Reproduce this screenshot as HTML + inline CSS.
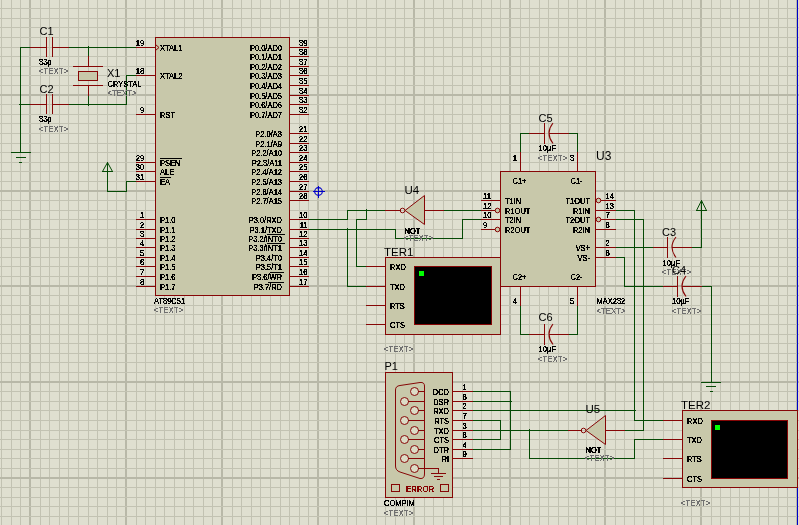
<!DOCTYPE html>
<html><head><meta charset="utf-8"><style>
html,body{margin:0;padding:0;background:#DFDFD0;}
svg{display:block;will-change:transform;}
text{font-family:"Liberation Sans", sans-serif;}
</style></head><body>
<svg width="799" height="525" viewBox="0 0 799 525">
<defs><filter id="crisp" x="-20%" y="-50%" width="140%" height="200%" filterUnits="objectBoundingBox"><feComponentTransfer><feFuncA type="discrete" tableValues="0 0 1 1 1 1"/></feComponentTransfer></filter><filter id="crisp2" x="-20%" y="-50%" width="140%" height="200%" filterUnits="objectBoundingBox"><feComponentTransfer><feFuncA type="discrete" tableValues="0 0 1 1"/></feComponentTransfer></filter></defs>
<rect x="0" y="0" width="799" height="525" fill="#DFDFD0"/><rect x="1" y="0" width="1" height="525" fill="#C2C2B2"/><rect x="11" y="0" width="1" height="525" fill="#C2C2B2"/><rect x="20" y="0" width="1" height="525" fill="#C2C2B2"/><rect x="29" y="0" width="2" height="525" fill="#B8B8A8"/><rect x="40" y="0" width="1" height="525" fill="#C2C2B2"/><rect x="49" y="0" width="1" height="525" fill="#C2C2B2"/><rect x="59" y="0" width="1" height="525" fill="#C2C2B2"/><rect x="68" y="0" width="1" height="525" fill="#C2C2B2"/><rect x="78" y="0" width="1" height="525" fill="#C2C2B2"/><rect x="88" y="0" width="1" height="525" fill="#C2C2B2"/><rect x="97" y="0" width="1" height="525" fill="#C2C2B2"/><rect x="107" y="0" width="1" height="525" fill="#C2C2B2"/><rect x="116" y="0" width="1" height="525" fill="#C2C2B2"/><rect x="125" y="0" width="2" height="525" fill="#B8B8A8"/><rect x="136" y="0" width="1" height="525" fill="#C2C2B2"/><rect x="145" y="0" width="1" height="525" fill="#C2C2B2"/><rect x="155" y="0" width="1" height="525" fill="#C2C2B2"/><rect x="164" y="0" width="1" height="525" fill="#C2C2B2"/><rect x="174" y="0" width="1" height="525" fill="#C2C2B2"/><rect x="184" y="0" width="1" height="525" fill="#C2C2B2"/><rect x="193" y="0" width="1" height="525" fill="#C2C2B2"/><rect x="203" y="0" width="1" height="525" fill="#C2C2B2"/><rect x="212" y="0" width="1" height="525" fill="#C2C2B2"/><rect x="221" y="0" width="2" height="525" fill="#B8B8A8"/><rect x="232" y="0" width="1" height="525" fill="#C2C2B2"/><rect x="241" y="0" width="1" height="525" fill="#C2C2B2"/><rect x="251" y="0" width="1" height="525" fill="#C2C2B2"/><rect x="260" y="0" width="1" height="525" fill="#C2C2B2"/><rect x="270" y="0" width="1" height="525" fill="#C2C2B2"/><rect x="280" y="0" width="1" height="525" fill="#C2C2B2"/><rect x="289" y="0" width="1" height="525" fill="#C2C2B2"/><rect x="299" y="0" width="1" height="525" fill="#C2C2B2"/><rect x="308" y="0" width="1" height="525" fill="#C2C2B2"/><rect x="317" y="0" width="2" height="525" fill="#B8B8A8"/><rect x="328" y="0" width="1" height="525" fill="#C2C2B2"/><rect x="337" y="0" width="1" height="525" fill="#C2C2B2"/><rect x="347" y="0" width="1" height="525" fill="#C2C2B2"/><rect x="356" y="0" width="1" height="525" fill="#C2C2B2"/><rect x="366" y="0" width="1" height="525" fill="#C2C2B2"/><rect x="376" y="0" width="1" height="525" fill="#C2C2B2"/><rect x="385" y="0" width="1" height="525" fill="#C2C2B2"/><rect x="395" y="0" width="1" height="525" fill="#C2C2B2"/><rect x="404" y="0" width="1" height="525" fill="#C2C2B2"/><rect x="413" y="0" width="2" height="525" fill="#B8B8A8"/><rect x="424" y="0" width="1" height="525" fill="#C2C2B2"/><rect x="433" y="0" width="1" height="525" fill="#C2C2B2"/><rect x="443" y="0" width="1" height="525" fill="#C2C2B2"/><rect x="452" y="0" width="1" height="525" fill="#C2C2B2"/><rect x="462" y="0" width="1" height="525" fill="#C2C2B2"/><rect x="472" y="0" width="1" height="525" fill="#C2C2B2"/><rect x="481" y="0" width="1" height="525" fill="#C2C2B2"/><rect x="491" y="0" width="1" height="525" fill="#C2C2B2"/><rect x="500" y="0" width="1" height="525" fill="#C2C2B2"/><rect x="509" y="0" width="2" height="525" fill="#B8B8A8"/><rect x="520" y="0" width="1" height="525" fill="#C2C2B2"/><rect x="529" y="0" width="1" height="525" fill="#C2C2B2"/><rect x="539" y="0" width="1" height="525" fill="#C2C2B2"/><rect x="548" y="0" width="1" height="525" fill="#C2C2B2"/><rect x="558" y="0" width="1" height="525" fill="#C2C2B2"/><rect x="568" y="0" width="1" height="525" fill="#C2C2B2"/><rect x="577" y="0" width="1" height="525" fill="#C2C2B2"/><rect x="586" y="0" width="1" height="525" fill="#C2C2B2"/><rect x="595" y="0" width="1" height="525" fill="#C2C2B2"/><rect x="604" y="0" width="2" height="525" fill="#B8B8A8"/><rect x="615" y="0" width="1" height="525" fill="#C2C2B2"/><rect x="624" y="0" width="1" height="525" fill="#C2C2B2"/><rect x="634" y="0" width="1" height="525" fill="#C2C2B2"/><rect x="643" y="0" width="1" height="525" fill="#C2C2B2"/><rect x="653" y="0" width="1" height="525" fill="#C2C2B2"/><rect x="663" y="0" width="1" height="525" fill="#C2C2B2"/><rect x="672" y="0" width="1" height="525" fill="#C2C2B2"/><rect x="682" y="0" width="1" height="525" fill="#C2C2B2"/><rect x="691" y="0" width="1" height="525" fill="#C2C2B2"/><rect x="700" y="0" width="2" height="525" fill="#B8B8A8"/><rect x="711" y="0" width="1" height="525" fill="#C2C2B2"/><rect x="720" y="0" width="1" height="525" fill="#C2C2B2"/><rect x="730" y="0" width="1" height="525" fill="#C2C2B2"/><rect x="739" y="0" width="1" height="525" fill="#C2C2B2"/><rect x="749" y="0" width="1" height="525" fill="#C2C2B2"/><rect x="759" y="0" width="1" height="525" fill="#C2C2B2"/><rect x="768" y="0" width="1" height="525" fill="#C2C2B2"/><rect x="778" y="0" width="1" height="525" fill="#C2C2B2"/><rect x="787" y="0" width="1" height="525" fill="#C2C2B2"/><rect x="796" y="0" width="2" height="525" fill="#B8B8A8"/><rect x="0" y="-2" width="799" height="2" fill="#B8B8A8"/><rect x="0" y="8" width="799" height="1" fill="#C2C2B2"/><rect x="0" y="18" width="799" height="1" fill="#C2C2B2"/><rect x="0" y="27" width="799" height="1" fill="#C2C2B2"/><rect x="0" y="37" width="799" height="1" fill="#C2C2B2"/><rect x="0" y="47" width="799" height="1" fill="#C2C2B2"/><rect x="0" y="56" width="799" height="1" fill="#C2C2B2"/><rect x="0" y="66" width="799" height="1" fill="#C2C2B2"/><rect x="0" y="75" width="799" height="1" fill="#C2C2B2"/><rect x="0" y="85" width="799" height="1" fill="#C2C2B2"/><rect x="0" y="94" width="799" height="2" fill="#B8B8A8"/><rect x="0" y="104" width="799" height="1" fill="#C2C2B2"/><rect x="0" y="114" width="799" height="1" fill="#C2C2B2"/><rect x="0" y="123" width="799" height="1" fill="#C2C2B2"/><rect x="0" y="133" width="799" height="1" fill="#C2C2B2"/><rect x="0" y="143" width="799" height="1" fill="#C2C2B2"/><rect x="0" y="152" width="799" height="1" fill="#C2C2B2"/><rect x="0" y="162" width="799" height="1" fill="#C2C2B2"/><rect x="0" y="171" width="799" height="1" fill="#C2C2B2"/><rect x="0" y="181" width="799" height="1" fill="#C2C2B2"/><rect x="0" y="190" width="799" height="2" fill="#B8B8A8"/><rect x="0" y="200" width="799" height="1" fill="#C2C2B2"/><rect x="0" y="210" width="799" height="1" fill="#C2C2B2"/><rect x="0" y="219" width="799" height="1" fill="#C2C2B2"/><rect x="0" y="229" width="799" height="1" fill="#C2C2B2"/><rect x="0" y="238" width="799" height="1" fill="#C2C2B2"/><rect x="0" y="247" width="799" height="1" fill="#C2C2B2"/><rect x="0" y="257" width="799" height="1" fill="#C2C2B2"/><rect x="0" y="266" width="799" height="1" fill="#C2C2B2"/><rect x="0" y="276" width="799" height="1" fill="#C2C2B2"/><rect x="0" y="285" width="799" height="2" fill="#B8B8A8"/><rect x="0" y="295" width="799" height="1" fill="#C2C2B2"/><rect x="0" y="305" width="799" height="1" fill="#C2C2B2"/><rect x="0" y="314" width="799" height="1" fill="#C2C2B2"/><rect x="0" y="324" width="799" height="1" fill="#C2C2B2"/><rect x="0" y="334" width="799" height="1" fill="#C2C2B2"/><rect x="0" y="343" width="799" height="1" fill="#C2C2B2"/><rect x="0" y="353" width="799" height="1" fill="#C2C2B2"/><rect x="0" y="362" width="799" height="1" fill="#C2C2B2"/><rect x="0" y="372" width="799" height="1" fill="#C2C2B2"/><rect x="0" y="381" width="799" height="2" fill="#B8B8A8"/><rect x="0" y="391" width="799" height="1" fill="#C2C2B2"/><rect x="0" y="401" width="799" height="1" fill="#C2C2B2"/><rect x="0" y="410" width="799" height="1" fill="#C2C2B2"/><rect x="0" y="420" width="799" height="1" fill="#C2C2B2"/><rect x="0" y="430" width="799" height="1" fill="#C2C2B2"/><rect x="0" y="439" width="799" height="1" fill="#C2C2B2"/><rect x="0" y="449" width="799" height="1" fill="#C2C2B2"/><rect x="0" y="458" width="799" height="1" fill="#C2C2B2"/><rect x="0" y="468" width="799" height="1" fill="#C2C2B2"/><rect x="0" y="477" width="799" height="2" fill="#B8B8A8"/><rect x="0" y="487" width="799" height="1" fill="#C2C2B2"/><rect x="0" y="497" width="799" height="1" fill="#C2C2B2"/><rect x="0" y="506" width="799" height="1" fill="#C2C2B2"/><rect x="0" y="516" width="799" height="1" fill="#C2C2B2"/><rect x="797" y="0" width="1" height="526" fill="#0000C8"/><rect x="20" y="47" width="1" height="106" fill="#064A06"/><rect x="20" y="47" width="11" height="1" fill="#064A06"/><rect x="68" y="47" width="69" height="1" fill="#064A06"/><rect x="20" y="104" width="11" height="1" fill="#064A06"/><rect x="68" y="104" width="59" height="1" fill="#064A06"/><rect x="126" y="75" width="1" height="30" fill="#064A06"/><rect x="126" y="75" width="11" height="1" fill="#064A06"/><rect x="88" y="47" width="1" height="10" fill="#064A06"/><rect x="88" y="95" width="1" height="10" fill="#064A06"/><rect x="126" y="181" width="11" height="1" fill="#064A06"/><rect x="126" y="181" width="1" height="11" fill="#064A06"/><rect x="107" y="191" width="20" height="1" fill="#064A06"/><rect x="308" y="219" width="40" height="1" fill="#064A06"/><rect x="347" y="210" width="1" height="10" fill="#064A06"/><rect x="347" y="210" width="39" height="1" fill="#064A06"/><rect x="366" y="210" width="1" height="10" fill="#064A06"/><rect x="356" y="219" width="11" height="1" fill="#064A06"/><rect x="356" y="219" width="1" height="48" fill="#064A06"/><rect x="356" y="266" width="11" height="1" fill="#064A06"/><rect x="308" y="229" width="88" height="1" fill="#064A06"/><rect x="395" y="229" width="1" height="10" fill="#064A06"/><rect x="395" y="238" width="68" height="1" fill="#064A06"/><rect x="462" y="219" width="1" height="20" fill="#064A06"/><rect x="462" y="219" width="20" height="1" fill="#064A06"/><rect x="347" y="229" width="1" height="58" fill="#064A06"/><rect x="347" y="286" width="20" height="1" fill="#064A06"/><rect x="443" y="210" width="39" height="1" fill="#064A06"/><rect x="520" y="133" width="10" height="1" fill="#064A06"/><rect x="520" y="133" width="1" height="20" fill="#064A06"/><rect x="568" y="133" width="10" height="1" fill="#064A06"/><rect x="577" y="133" width="1" height="20" fill="#064A06"/><rect x="520" y="334" width="10" height="1" fill="#064A06"/><rect x="520" y="305" width="1" height="30" fill="#064A06"/><rect x="568" y="334" width="10" height="1" fill="#064A06"/><rect x="577" y="305" width="1" height="30" fill="#064A06"/><rect x="615" y="210" width="20" height="1" fill="#064A06"/><rect x="634" y="210" width="1" height="211" fill="#064A06"/><rect x="634" y="420" width="30" height="1" fill="#064A06"/><rect x="615" y="219" width="29" height="1" fill="#064A06"/><rect x="643" y="219" width="1" height="212" fill="#064A06"/><rect x="624" y="430" width="20" height="1" fill="#064A06"/><rect x="615" y="247" width="39" height="1" fill="#064A06"/><rect x="691" y="247" width="11" height="1" fill="#064A06"/><rect x="615" y="257" width="10" height="1" fill="#064A06"/><rect x="624" y="257" width="1" height="30" fill="#064A06"/><rect x="624" y="286" width="40" height="1" fill="#064A06"/><rect x="701" y="286" width="11" height="1" fill="#064A06"/><rect x="711" y="286" width="1" height="97" fill="#064A06"/><rect x="472" y="391" width="39" height="1" fill="#064A06"/><rect x="510" y="391" width="1" height="59" fill="#064A06"/><rect x="472" y="449" width="39" height="1" fill="#064A06"/><rect x="472" y="401" width="39" height="1" fill="#064A06"/><rect x="472" y="410" width="163" height="1" fill="#064A06"/><rect x="472" y="420" width="29" height="1" fill="#064A06"/><rect x="500" y="420" width="1" height="20" fill="#064A06"/><rect x="472" y="439" width="29" height="1" fill="#064A06"/><rect x="472" y="430" width="97" height="1" fill="#064A06"/><rect x="529" y="430" width="1" height="29" fill="#064A06"/><rect x="529" y="458" width="106" height="1" fill="#064A06"/><rect x="634" y="439" width="1" height="20" fill="#064A06"/><rect x="634" y="439" width="30" height="1" fill="#064A06"/><rect x="19" y="104" width="3" height="1" fill="#064A06"/><rect x="20" y="103" width="1" height="3" fill="#064A06"/><rect x="87" y="47" width="3" height="1" fill="#064A06"/><rect x="88" y="46" width="1" height="3" fill="#064A06"/><rect x="87" y="104" width="3" height="1" fill="#064A06"/><rect x="88" y="103" width="1" height="3" fill="#064A06"/><rect x="365" y="210" width="3" height="1" fill="#064A06"/><rect x="366" y="209" width="1" height="3" fill="#064A06"/><rect x="346" y="229" width="3" height="1" fill="#064A06"/><rect x="347" y="228" width="1" height="3" fill="#064A06"/><rect x="509" y="401" width="3" height="1" fill="#064A06"/><rect x="510" y="400" width="1" height="3" fill="#064A06"/><rect x="528" y="430" width="3" height="1" fill="#064A06"/><rect x="529" y="429" width="1" height="3" fill="#064A06"/><rect x="633" y="410" width="3" height="1" fill="#064A06"/><rect x="634" y="409" width="1" height="3" fill="#064A06"/><rect x="155" y="37" width="135" height="259" fill="#C8C8AA"/><rect x="155" y="37" width="135" height="1" fill="#860606"/><rect x="155" y="295" width="135" height="1" fill="#860606"/><rect x="155" y="37" width="1" height="259" fill="#860606"/><rect x="289" y="37" width="1" height="259" fill="#860606"/><rect x="136" y="47" width="20" height="1" fill="#860606"/><text filter="url(#crisp)" transform="translate(144.3,46) scale(1,1.15)" font-size="7.6" font-weight="normal" fill="#000" text-anchor="end" stroke="#000" stroke-width="0.1">19</text><text filter="url(#crisp)" transform="translate(160,51) scale(1,1.1)" font-size="7.5" font-weight="normal" fill="#000" text-anchor="start" stroke="#000" stroke-width="0.1">XTAL1</text><rect x="136" y="75" width="20" height="1" fill="#860606"/><text filter="url(#crisp)" transform="translate(144.3,74) scale(1,1.15)" font-size="7.6" font-weight="normal" fill="#000" text-anchor="end" stroke="#000" stroke-width="0.1">18</text><text filter="url(#crisp)" transform="translate(160,79) scale(1,1.1)" font-size="7.5" font-weight="normal" fill="#000" text-anchor="start" stroke="#000" stroke-width="0.1">XTAL2</text><rect x="136" y="114" width="20" height="1" fill="#860606"/><text filter="url(#crisp)" transform="translate(144.3,113) scale(1,1.15)" font-size="7.6" font-weight="normal" fill="#000" text-anchor="end" stroke="#000" stroke-width="0.1">9</text><text filter="url(#crisp)" transform="translate(160,118) scale(1,1.1)" font-size="7.5" font-weight="normal" fill="#000" text-anchor="start" stroke="#000" stroke-width="0.1">RST</text><rect x="136" y="162" width="20" height="1" fill="#860606"/><text filter="url(#crisp)" transform="translate(144.3,161) scale(1,1.15)" font-size="7.6" font-weight="normal" fill="#000" text-anchor="end" stroke="#000" stroke-width="0.1">29</text><text filter="url(#crisp)" transform="translate(160,166) scale(1,1.1)" font-size="7.5" font-weight="normal" fill="#000" text-anchor="start" stroke="#000" stroke-width="0.1">PSEN</text><rect x="136" y="171" width="20" height="1" fill="#860606"/><text filter="url(#crisp)" transform="translate(144.3,170) scale(1,1.15)" font-size="7.6" font-weight="normal" fill="#000" text-anchor="end" stroke="#000" stroke-width="0.1">30</text><text filter="url(#crisp)" transform="translate(160,175) scale(1,1.1)" font-size="7.5" font-weight="normal" fill="#000" text-anchor="start" stroke="#000" stroke-width="0.1">ALE</text><rect x="136" y="181" width="20" height="1" fill="#860606"/><text filter="url(#crisp)" transform="translate(144.3,180) scale(1,1.15)" font-size="7.6" font-weight="normal" fill="#000" text-anchor="end" stroke="#000" stroke-width="0.1">31</text><text filter="url(#crisp)" transform="translate(160,185) scale(1,1.1)" font-size="7.5" font-weight="normal" fill="#000" text-anchor="start" stroke="#000" stroke-width="0.1">EA</text><rect x="136" y="219" width="20" height="1" fill="#860606"/><text filter="url(#crisp)" transform="translate(144.3,218) scale(1,1.15)" font-size="7.6" font-weight="normal" fill="#000" text-anchor="end" stroke="#000" stroke-width="0.1">1</text><text filter="url(#crisp)" transform="translate(160,223) scale(1,1.1)" font-size="7.5" font-weight="normal" fill="#000" text-anchor="start" stroke="#000" stroke-width="0.1">P1.0</text><rect x="136" y="229" width="20" height="1" fill="#860606"/><text filter="url(#crisp)" transform="translate(144.3,228) scale(1,1.15)" font-size="7.6" font-weight="normal" fill="#000" text-anchor="end" stroke="#000" stroke-width="0.1">2</text><text filter="url(#crisp)" transform="translate(160,233) scale(1,1.1)" font-size="7.5" font-weight="normal" fill="#000" text-anchor="start" stroke="#000" stroke-width="0.1">P1.1</text><rect x="136" y="238" width="20" height="1" fill="#860606"/><text filter="url(#crisp)" transform="translate(144.3,237) scale(1,1.15)" font-size="7.6" font-weight="normal" fill="#000" text-anchor="end" stroke="#000" stroke-width="0.1">3</text><text filter="url(#crisp)" transform="translate(160,242) scale(1,1.1)" font-size="7.5" font-weight="normal" fill="#000" text-anchor="start" stroke="#000" stroke-width="0.1">P1.2</text><rect x="136" y="247" width="20" height="1" fill="#860606"/><text filter="url(#crisp)" transform="translate(144.3,246) scale(1,1.15)" font-size="7.6" font-weight="normal" fill="#000" text-anchor="end" stroke="#000" stroke-width="0.1">4</text><text filter="url(#crisp)" transform="translate(160,251) scale(1,1.1)" font-size="7.5" font-weight="normal" fill="#000" text-anchor="start" stroke="#000" stroke-width="0.1">P1.3</text><rect x="136" y="257" width="20" height="1" fill="#860606"/><text filter="url(#crisp)" transform="translate(144.3,256) scale(1,1.15)" font-size="7.6" font-weight="normal" fill="#000" text-anchor="end" stroke="#000" stroke-width="0.1">5</text><text filter="url(#crisp)" transform="translate(160,261) scale(1,1.1)" font-size="7.5" font-weight="normal" fill="#000" text-anchor="start" stroke="#000" stroke-width="0.1">P1.4</text><rect x="136" y="266" width="20" height="1" fill="#860606"/><text filter="url(#crisp)" transform="translate(144.3,265) scale(1,1.15)" font-size="7.6" font-weight="normal" fill="#000" text-anchor="end" stroke="#000" stroke-width="0.1">6</text><text filter="url(#crisp)" transform="translate(160,270) scale(1,1.1)" font-size="7.5" font-weight="normal" fill="#000" text-anchor="start" stroke="#000" stroke-width="0.1">P1.5</text><rect x="136" y="276" width="20" height="1" fill="#860606"/><text filter="url(#crisp)" transform="translate(144.3,275) scale(1,1.15)" font-size="7.6" font-weight="normal" fill="#000" text-anchor="end" stroke="#000" stroke-width="0.1">7</text><text filter="url(#crisp)" transform="translate(160,280) scale(1,1.1)" font-size="7.5" font-weight="normal" fill="#000" text-anchor="start" stroke="#000" stroke-width="0.1">P1.6</text><rect x="136" y="286" width="20" height="1" fill="#860606"/><text filter="url(#crisp)" transform="translate(144.3,285) scale(1,1.15)" font-size="7.6" font-weight="normal" fill="#000" text-anchor="end" stroke="#000" stroke-width="0.1">8</text><text filter="url(#crisp)" transform="translate(160,290) scale(1,1.1)" font-size="7.5" font-weight="normal" fill="#000" text-anchor="start" stroke="#000" stroke-width="0.1">P1.7</text><path d="M155.5,44.5 L159,47.5 L155.5,50.5" fill="none" stroke="#860606" stroke-width="1"/><rect x="160" y="158" width="22" height="1" fill="#000"/><rect x="160" y="177" width="11" height="1" fill="#000"/><rect x="289" y="47" width="20" height="1" fill="#860606"/><text filter="url(#crisp)" transform="translate(307.5,46) scale(1,1.15)" font-size="7.6" font-weight="normal" fill="#000" text-anchor="end" stroke="#000" stroke-width="0.1">39</text><text filter="url(#crisp)" transform="translate(282,51) scale(1,1.1)" font-size="7.5" font-weight="normal" fill="#000" text-anchor="end" stroke="#000" stroke-width="0.1">P0.0/AD0</text><rect x="289" y="56" width="20" height="1" fill="#860606"/><text filter="url(#crisp)" transform="translate(307.5,55) scale(1,1.15)" font-size="7.6" font-weight="normal" fill="#000" text-anchor="end" stroke="#000" stroke-width="0.1">38</text><text filter="url(#crisp)" transform="translate(282,60) scale(1,1.1)" font-size="7.5" font-weight="normal" fill="#000" text-anchor="end" stroke="#000" stroke-width="0.1">P0.1/AD1</text><rect x="289" y="66" width="20" height="1" fill="#860606"/><text filter="url(#crisp)" transform="translate(307.5,65) scale(1,1.15)" font-size="7.6" font-weight="normal" fill="#000" text-anchor="end" stroke="#000" stroke-width="0.1">37</text><text filter="url(#crisp)" transform="translate(282,70) scale(1,1.1)" font-size="7.5" font-weight="normal" fill="#000" text-anchor="end" stroke="#000" stroke-width="0.1">P0.2/AD2</text><rect x="289" y="75" width="20" height="1" fill="#860606"/><text filter="url(#crisp)" transform="translate(307.5,74) scale(1,1.15)" font-size="7.6" font-weight="normal" fill="#000" text-anchor="end" stroke="#000" stroke-width="0.1">36</text><text filter="url(#crisp)" transform="translate(282,79) scale(1,1.1)" font-size="7.5" font-weight="normal" fill="#000" text-anchor="end" stroke="#000" stroke-width="0.1">P0.3/AD3</text><rect x="289" y="85" width="20" height="1" fill="#860606"/><text filter="url(#crisp)" transform="translate(307.5,84) scale(1,1.15)" font-size="7.6" font-weight="normal" fill="#000" text-anchor="end" stroke="#000" stroke-width="0.1">35</text><text filter="url(#crisp)" transform="translate(282,89) scale(1,1.1)" font-size="7.5" font-weight="normal" fill="#000" text-anchor="end" stroke="#000" stroke-width="0.1">P0.4/AD4</text><rect x="289" y="95" width="20" height="1" fill="#860606"/><text filter="url(#crisp)" transform="translate(307.5,94) scale(1,1.15)" font-size="7.6" font-weight="normal" fill="#000" text-anchor="end" stroke="#000" stroke-width="0.1">34</text><text filter="url(#crisp)" transform="translate(282,99) scale(1,1.1)" font-size="7.5" font-weight="normal" fill="#000" text-anchor="end" stroke="#000" stroke-width="0.1">P0.5/AD5</text><rect x="289" y="104" width="20" height="1" fill="#860606"/><text filter="url(#crisp)" transform="translate(307.5,103) scale(1,1.15)" font-size="7.6" font-weight="normal" fill="#000" text-anchor="end" stroke="#000" stroke-width="0.1">33</text><text filter="url(#crisp)" transform="translate(282,108) scale(1,1.1)" font-size="7.5" font-weight="normal" fill="#000" text-anchor="end" stroke="#000" stroke-width="0.1">P0.6/AD6</text><rect x="289" y="114" width="20" height="1" fill="#860606"/><text filter="url(#crisp)" transform="translate(307.5,113) scale(1,1.15)" font-size="7.6" font-weight="normal" fill="#000" text-anchor="end" stroke="#000" stroke-width="0.1">32</text><text filter="url(#crisp)" transform="translate(282,118) scale(1,1.1)" font-size="7.5" font-weight="normal" fill="#000" text-anchor="end" stroke="#000" stroke-width="0.1">P0.7/AD7</text><rect x="289" y="133" width="20" height="1" fill="#860606"/><text filter="url(#crisp)" transform="translate(307.5,132) scale(1,1.15)" font-size="7.6" font-weight="normal" fill="#000" text-anchor="end" stroke="#000" stroke-width="0.1">21</text><text filter="url(#crisp)" transform="translate(282,137) scale(1,1.1)" font-size="7.5" font-weight="normal" fill="#000" text-anchor="end" stroke="#000" stroke-width="0.1">P2.0/A8</text><rect x="289" y="143" width="20" height="1" fill="#860606"/><text filter="url(#crisp)" transform="translate(307.5,142) scale(1,1.15)" font-size="7.6" font-weight="normal" fill="#000" text-anchor="end" stroke="#000" stroke-width="0.1">22</text><text filter="url(#crisp)" transform="translate(282,147) scale(1,1.1)" font-size="7.5" font-weight="normal" fill="#000" text-anchor="end" stroke="#000" stroke-width="0.1">P2.1/A9</text><rect x="289" y="152" width="20" height="1" fill="#860606"/><text filter="url(#crisp)" transform="translate(307.5,151) scale(1,1.15)" font-size="7.6" font-weight="normal" fill="#000" text-anchor="end" stroke="#000" stroke-width="0.1">23</text><text filter="url(#crisp)" transform="translate(282,156) scale(1,1.1)" font-size="7.5" font-weight="normal" fill="#000" text-anchor="end" stroke="#000" stroke-width="0.1">P2.2/A10</text><rect x="289" y="162" width="20" height="1" fill="#860606"/><text filter="url(#crisp)" transform="translate(307.5,161) scale(1,1.15)" font-size="7.6" font-weight="normal" fill="#000" text-anchor="end" stroke="#000" stroke-width="0.1">24</text><text filter="url(#crisp)" transform="translate(282,166) scale(1,1.1)" font-size="7.5" font-weight="normal" fill="#000" text-anchor="end" stroke="#000" stroke-width="0.1">P2.3/A11</text><rect x="289" y="171" width="20" height="1" fill="#860606"/><text filter="url(#crisp)" transform="translate(307.5,170) scale(1,1.15)" font-size="7.6" font-weight="normal" fill="#000" text-anchor="end" stroke="#000" stroke-width="0.1">25</text><text filter="url(#crisp)" transform="translate(282,175) scale(1,1.1)" font-size="7.5" font-weight="normal" fill="#000" text-anchor="end" stroke="#000" stroke-width="0.1">P2.4/A12</text><rect x="289" y="181" width="20" height="1" fill="#860606"/><text filter="url(#crisp)" transform="translate(307.5,180) scale(1,1.15)" font-size="7.6" font-weight="normal" fill="#000" text-anchor="end" stroke="#000" stroke-width="0.1">26</text><text filter="url(#crisp)" transform="translate(282,185) scale(1,1.1)" font-size="7.5" font-weight="normal" fill="#000" text-anchor="end" stroke="#000" stroke-width="0.1">P2.5/A13</text><rect x="289" y="191" width="20" height="1" fill="#860606"/><text filter="url(#crisp)" transform="translate(307.5,190) scale(1,1.15)" font-size="7.6" font-weight="normal" fill="#000" text-anchor="end" stroke="#000" stroke-width="0.1">27</text><text filter="url(#crisp)" transform="translate(282,195) scale(1,1.1)" font-size="7.5" font-weight="normal" fill="#000" text-anchor="end" stroke="#000" stroke-width="0.1">P2.6/A14</text><rect x="289" y="200" width="20" height="1" fill="#860606"/><text filter="url(#crisp)" transform="translate(307.5,199) scale(1,1.15)" font-size="7.6" font-weight="normal" fill="#000" text-anchor="end" stroke="#000" stroke-width="0.1">28</text><text filter="url(#crisp)" transform="translate(282,204) scale(1,1.1)" font-size="7.5" font-weight="normal" fill="#000" text-anchor="end" stroke="#000" stroke-width="0.1">P2.7/A15</text><rect x="289" y="219" width="20" height="1" fill="#860606"/><text filter="url(#crisp)" transform="translate(307.5,218) scale(1,1.15)" font-size="7.6" font-weight="normal" fill="#000" text-anchor="end" stroke="#000" stroke-width="0.1">10</text><text filter="url(#crisp)" transform="translate(282,223) scale(1,1.1)" font-size="7.5" font-weight="normal" fill="#000" text-anchor="end" stroke="#000" stroke-width="0.1">P3.0/RXD</text><rect x="289" y="229" width="20" height="1" fill="#860606"/><text filter="url(#crisp)" transform="translate(307.5,228) scale(1,1.15)" font-size="7.6" font-weight="normal" fill="#000" text-anchor="end" stroke="#000" stroke-width="0.1">11</text><text filter="url(#crisp)" transform="translate(282,233) scale(1,1.1)" font-size="7.5" font-weight="normal" fill="#000" text-anchor="end" stroke="#000" stroke-width="0.1">P3.1/TXD</text><rect x="289" y="238" width="20" height="1" fill="#860606"/><text filter="url(#crisp)" transform="translate(307.5,237) scale(1,1.15)" font-size="7.6" font-weight="normal" fill="#000" text-anchor="end" stroke="#000" stroke-width="0.1">12</text><text filter="url(#crisp)" transform="translate(282,242) scale(1,1.1)" font-size="7.5" font-weight="normal" fill="#000" text-anchor="end" stroke="#000" stroke-width="0.1">P3.2/INT0</text><rect x="289" y="247" width="20" height="1" fill="#860606"/><text filter="url(#crisp)" transform="translate(307.5,246) scale(1,1.15)" font-size="7.6" font-weight="normal" fill="#000" text-anchor="end" stroke="#000" stroke-width="0.1">13</text><text filter="url(#crisp)" transform="translate(282,251) scale(1,1.1)" font-size="7.5" font-weight="normal" fill="#000" text-anchor="end" stroke="#000" stroke-width="0.1">P3.3/INT1</text><rect x="289" y="257" width="20" height="1" fill="#860606"/><text filter="url(#crisp)" transform="translate(307.5,256) scale(1,1.15)" font-size="7.6" font-weight="normal" fill="#000" text-anchor="end" stroke="#000" stroke-width="0.1">14</text><text filter="url(#crisp)" transform="translate(282,261) scale(1,1.1)" font-size="7.5" font-weight="normal" fill="#000" text-anchor="end" stroke="#000" stroke-width="0.1">P3.4/T0</text><rect x="289" y="266" width="20" height="1" fill="#860606"/><text filter="url(#crisp)" transform="translate(307.5,265) scale(1,1.15)" font-size="7.6" font-weight="normal" fill="#000" text-anchor="end" stroke="#000" stroke-width="0.1">15</text><text filter="url(#crisp)" transform="translate(282,270) scale(1,1.1)" font-size="7.5" font-weight="normal" fill="#000" text-anchor="end" stroke="#000" stroke-width="0.1">P3.5/T1</text><rect x="289" y="276" width="20" height="1" fill="#860606"/><text filter="url(#crisp)" transform="translate(307.5,275) scale(1,1.15)" font-size="7.6" font-weight="normal" fill="#000" text-anchor="end" stroke="#000" stroke-width="0.1">16</text><text filter="url(#crisp)" transform="translate(282,280) scale(1,1.1)" font-size="7.5" font-weight="normal" fill="#000" text-anchor="end" stroke="#000" stroke-width="0.1">P3.6/WR</text><rect x="289" y="286" width="20" height="1" fill="#860606"/><text filter="url(#crisp)" transform="translate(307.5,285) scale(1,1.15)" font-size="7.6" font-weight="normal" fill="#000" text-anchor="end" stroke="#000" stroke-width="0.1">17</text><text filter="url(#crisp)" transform="translate(282,290) scale(1,1.1)" font-size="7.5" font-weight="normal" fill="#000" text-anchor="end" stroke="#000" stroke-width="0.1">P3.7/RD</text><rect x="267" y="234" width="18" height="1" fill="#000"/><rect x="267" y="243" width="18" height="1" fill="#000"/><rect x="270" y="272" width="14" height="1" fill="#000"/><rect x="268" y="282" width="16" height="1" fill="#000"/><text filter="url(#crisp)" transform="translate(154,304) scale(1,1.1)" font-size="7.5" font-weight="normal" fill="#000" text-anchor="start" stroke="#000" stroke-width="0.1">AT89C51</text><text filter="url(#crisp)" transform="translate(154,313.0) scale(1,1.15)" font-size="7.8" font-weight="normal" fill="#707070" text-anchor="start">&lt;TEXT&gt;</text><rect x="30" y="47" width="17" height="1" fill="#860606"/><rect x="52" y="47" width="17" height="1" fill="#860606"/><rect x="46" y="37" width="1" height="20" fill="#860606"/><rect x="52" y="37" width="1" height="20" fill="#860606"/><rect x="30" y="104" width="17" height="1" fill="#860606"/><rect x="52" y="104" width="17" height="1" fill="#860606"/><rect x="46" y="94" width="1" height="20" fill="#860606"/><rect x="52" y="94" width="1" height="20" fill="#860606"/><text x="39.5" y="35" font-size="11" font-weight="normal" fill="#000" text-anchor="start">C1</text><text filter="url(#crisp)" transform="translate(39,64.5) scale(1,1.1)" font-size="7.5" font-weight="normal" fill="#000" text-anchor="start" stroke="#000" stroke-width="0.1">33p</text><text filter="url(#crisp)" transform="translate(39,74.0) scale(1,1.15)" font-size="7.8" font-weight="normal" fill="#707070" text-anchor="start">&lt;TEXT&gt;</text><text x="39.5" y="93" font-size="11" font-weight="normal" fill="#000" text-anchor="start">C2</text><text filter="url(#crisp)" transform="translate(39,122) scale(1,1.1)" font-size="7.5" font-weight="normal" fill="#000" text-anchor="start" stroke="#000" stroke-width="0.1">33p</text><text filter="url(#crisp)" transform="translate(39,131.5) scale(1,1.15)" font-size="7.8" font-weight="normal" fill="#707070" text-anchor="start">&lt;TEXT&gt;</text><rect x="88" y="56" width="1" height="11" fill="#860606"/><rect x="88" y="85" width="1" height="11" fill="#860606"/><rect x="73" y="66" width="30" height="1" fill="#860606"/><rect x="73" y="85" width="30" height="1" fill="#860606"/><rect x="78" y="71" width="20" height="10" fill="#C8C8AA"/><rect x="78" y="71" width="20" height="1" fill="#860606"/><rect x="78" y="80" width="20" height="1" fill="#860606"/><rect x="78" y="71" width="1" height="10" fill="#860606"/><rect x="97" y="71" width="1" height="10" fill="#860606"/><text x="107" y="76.5" font-size="11" font-weight="normal" fill="#000" text-anchor="start">X1</text><text filter="url(#crisp)" transform="translate(107.5,86.8) scale(1,1.1)" font-size="7.5" font-weight="normal" fill="#000" text-anchor="start" stroke="#000" stroke-width="0.1">CRYSTAL</text><text filter="url(#crisp)" transform="translate(107.5,95.8) scale(1,1.15)" font-size="7.8" font-weight="normal" fill="#707070" text-anchor="start">&lt;TEXT&gt;</text><rect x="11" y="152" width="20" height="1" fill="#064A06"/><rect x="16" y="157" width="10" height="1" fill="#064A06"/><rect x="19" y="162" width="3" height="1" fill="#064A06"/><rect x="107" y="171" width="1" height="21" fill="#064A06"/><path d="M107.5,162.5 L102.5,171.5 M107.5,162.5 L112.5,171.5" fill="none" stroke="#064A06" stroke-width="1"/><rect x="102" y="171" width="11" height="1" fill="#064A06"/><rect x="107" y="162" width="1" height="10" fill="#064A06"/><circle cx="318.5" cy="191.5" r="3.8" fill="none" stroke="#0000C8" stroke-width="1.2"/><rect x="313" y="191" width="12" height="1" fill="#0000C8"/><rect x="318" y="186" width="1" height="12" fill="#0000C8"/><rect x="385" y="210" width="16" height="1" fill="#860606"/><circle cx="402.5" cy="210.5" r="2.3" fill="none" stroke="#860606" stroke-width="1"/><path d="M405,210.5 L424.5,195.5 L424.5,224.5 Z" fill="#C8C8AA" stroke="#860606" stroke-width="1"/><rect x="424" y="210" width="20" height="1" fill="#860606"/><text x="404.5" y="194" font-size="11.5" font-weight="normal" fill="#000" text-anchor="start">U4</text><text filter="url(#crisp)" transform="translate(404.5,234) scale(1,1.1)" font-size="7.5" font-weight="normal" fill="#000" text-anchor="start" stroke="#000" stroke-width="0.1">NOT</text><text filter="url(#crisp)" transform="translate(404,240.5) scale(1,1.15)" font-size="7.8" font-weight="normal" fill="#707070" text-anchor="start">&lt;TEXT&gt;</text><rect x="385" y="257" width="116" height="78" fill="#C8C8AA"/><rect x="385" y="257" width="116" height="1" fill="#860606"/><rect x="385" y="334" width="116" height="1" fill="#860606"/><rect x="385" y="257" width="1" height="78" fill="#860606"/><rect x="500" y="257" width="1" height="78" fill="#860606"/><rect x="414" y="266" width="78" height="59" fill="#000"/><rect x="414" y="266" width="78" height="1" fill="#860606"/><rect x="414" y="324" width="78" height="1" fill="#860606"/><rect x="414" y="266" width="1" height="59" fill="#860606"/><rect x="491" y="266" width="1" height="59" fill="#860606"/><rect x="419" y="271" width="5" height="5" fill="#00FF00"/><rect x="366" y="266" width="20" height="1" fill="#860606"/><text filter="url(#crisp)" transform="translate(390,270) scale(1,1.1)" font-size="7.5" font-weight="normal" fill="#000" text-anchor="start" stroke="#000" stroke-width="0.1">RXD</text><rect x="366" y="286" width="20" height="1" fill="#860606"/><text filter="url(#crisp)" transform="translate(390,290) scale(1,1.1)" font-size="7.5" font-weight="normal" fill="#000" text-anchor="start" stroke="#000" stroke-width="0.1">TXD</text><rect x="366" y="305" width="20" height="1" fill="#860606"/><text filter="url(#crisp)" transform="translate(390,309) scale(1,1.1)" font-size="7.5" font-weight="normal" fill="#000" text-anchor="start" stroke="#000" stroke-width="0.1">RTS</text><rect x="366" y="324" width="20" height="1" fill="#860606"/><text filter="url(#crisp)" transform="translate(390,328) scale(1,1.1)" font-size="7.5" font-weight="normal" fill="#000" text-anchor="start" stroke="#000" stroke-width="0.1">CTS</text><text x="384" y="255.5" font-size="11.5" font-weight="normal" fill="#000" text-anchor="start">TER1</text><text filter="url(#crisp)" transform="translate(384,351.5) scale(1,1.15)" font-size="7.8" font-weight="normal" fill="#707070" text-anchor="start">&lt;TEXT&gt;</text><rect x="500" y="171" width="96" height="116" fill="#C8C8AA"/><rect x="500" y="171" width="96" height="1" fill="#860606"/><rect x="500" y="286" width="96" height="1" fill="#860606"/><rect x="500" y="171" width="1" height="116" fill="#860606"/><rect x="595" y="171" width="1" height="116" fill="#860606"/><rect x="520" y="152" width="1" height="20" fill="#860606"/><rect x="577" y="152" width="1" height="20" fill="#860606"/><rect x="520" y="286" width="1" height="20" fill="#860606"/><rect x="577" y="286" width="1" height="20" fill="#860606"/><rect x="529" y="133" width="16" height="1" fill="#860606"/><rect x="549" y="133" width="20" height="1" fill="#860606"/><rect x="544" y="123" width="1" height="21" fill="#860606"/><path d="M553,123 Q545,133 553,143.5" fill="none" stroke="#860606" stroke-width="1.1"/><rect x="529" y="334" width="16" height="1" fill="#860606"/><rect x="549" y="334" width="20" height="1" fill="#860606"/><rect x="544" y="324" width="1" height="21" fill="#860606"/><path d="M553,324 Q545,334 553,344.5" fill="none" stroke="#860606" stroke-width="1.1"/><text x="538.5" y="121.5" font-size="11" font-weight="normal" fill="#000" text-anchor="start">C5</text><text filter="url(#crisp)" transform="translate(538.5,150.5) scale(1,1.1)" font-size="7.5" font-weight="normal" fill="#000" text-anchor="start" stroke="#000" stroke-width="0.1">10µF</text><text filter="url(#crisp)" transform="translate(538,160.5) scale(1,1.15)" font-size="7.8" font-weight="normal" fill="#707070" text-anchor="start">&lt;TEXT&gt;</text><text x="538.5" y="320.5" font-size="11" font-weight="normal" fill="#000" text-anchor="start">C6</text><text filter="url(#crisp)" transform="translate(538.5,352) scale(1,1.1)" font-size="7.5" font-weight="normal" fill="#000" text-anchor="start" stroke="#000" stroke-width="0.1">10µF</text><text filter="url(#crisp)" transform="translate(538,361.5) scale(1,1.15)" font-size="7.8" font-weight="normal" fill="#707070" text-anchor="start">&lt;TEXT&gt;</text><text filter="url(#crisp)" transform="translate(517,161) scale(1,1.15)" font-size="7.6" font-weight="normal" fill="#000" text-anchor="end" stroke="#000" stroke-width="0.1">1</text><text filter="url(#crisp)" transform="translate(570,161) scale(1,1.15)" font-size="7.6" font-weight="normal" fill="#000" text-anchor="start" stroke="#000" stroke-width="0.1">3</text><text filter="url(#crisp)" transform="translate(517,304) scale(1,1.15)" font-size="7.6" font-weight="normal" fill="#000" text-anchor="end" stroke="#000" stroke-width="0.1">4</text><text filter="url(#crisp)" transform="translate(570,304) scale(1,1.15)" font-size="7.6" font-weight="normal" fill="#000" text-anchor="start" stroke="#000" stroke-width="0.1">5</text><text filter="url(#crisp)" transform="translate(512.5,183.5) scale(1,1.1)" font-size="7.5" font-weight="normal" fill="#000" text-anchor="start" stroke="#000" stroke-width="0.1">C1+</text><text filter="url(#crisp)" transform="translate(570.5,183.5) scale(1,1.1)" font-size="7.5" font-weight="normal" fill="#000" text-anchor="start" stroke="#000" stroke-width="0.1">C1-</text><text filter="url(#crisp)" transform="translate(512.5,280) scale(1,1.1)" font-size="7.5" font-weight="normal" fill="#000" text-anchor="start" stroke="#000" stroke-width="0.1">C2+</text><text filter="url(#crisp)" transform="translate(570.5,280) scale(1,1.1)" font-size="7.5" font-weight="normal" fill="#000" text-anchor="start" stroke="#000" stroke-width="0.1">C2-</text><text x="596" y="159.5" font-size="12" font-weight="normal" fill="#000" text-anchor="start">U3</text><text filter="url(#crisp)" transform="translate(596.5,304) scale(1,1.1)" font-size="7.5" font-weight="normal" fill="#000" text-anchor="start" stroke="#000" stroke-width="0.1">MAX232</text><text filter="url(#crisp)" transform="translate(596.5,313.5) scale(1,1.15)" font-size="7.8" font-weight="normal" fill="#707070" text-anchor="start">&lt;TEXT&gt;</text><rect x="481" y="200" width="20" height="1" fill="#860606"/><text filter="url(#crisp)" transform="translate(483,199) scale(1,1.15)" font-size="7.6" font-weight="normal" fill="#000" text-anchor="start" stroke="#000" stroke-width="0.1">11</text><text filter="url(#crisp)" transform="translate(505,204) scale(1,1.1)" font-size="7.5" font-weight="normal" fill="#000" text-anchor="start" stroke="#000" stroke-width="0.1">T1IN</text><rect x="481" y="210" width="20" height="1" fill="#860606"/><text filter="url(#crisp)" transform="translate(483,209) scale(1,1.15)" font-size="7.6" font-weight="normal" fill="#000" text-anchor="start" stroke="#000" stroke-width="0.1">12</text><text filter="url(#crisp)" transform="translate(505,214) scale(1,1.1)" font-size="7.5" font-weight="normal" fill="#000" text-anchor="start" stroke="#000" stroke-width="0.1">R1OUT</text><circle cx="497.5" cy="210.5" r="2.3" fill="#C8C8AA" stroke="#860606" stroke-width="1"/><rect x="481" y="219" width="20" height="1" fill="#860606"/><text filter="url(#crisp)" transform="translate(483,218) scale(1,1.15)" font-size="7.6" font-weight="normal" fill="#000" text-anchor="start" stroke="#000" stroke-width="0.1">10</text><text filter="url(#crisp)" transform="translate(505,223) scale(1,1.1)" font-size="7.5" font-weight="normal" fill="#000" text-anchor="start" stroke="#000" stroke-width="0.1">T2IN</text><rect x="481" y="229" width="20" height="1" fill="#860606"/><text filter="url(#crisp)" transform="translate(483,228) scale(1,1.15)" font-size="7.6" font-weight="normal" fill="#000" text-anchor="start" stroke="#000" stroke-width="0.1">9</text><text filter="url(#crisp)" transform="translate(505,233) scale(1,1.1)" font-size="7.5" font-weight="normal" fill="#000" text-anchor="start" stroke="#000" stroke-width="0.1">R2OUT</text><circle cx="497.5" cy="229.5" r="2.3" fill="#C8C8AA" stroke="#860606" stroke-width="1"/><rect x="595" y="200" width="21" height="1" fill="#860606"/><text filter="url(#crisp)" transform="translate(605.5,199) scale(1,1.15)" font-size="7.6" font-weight="normal" fill="#000" text-anchor="start" stroke="#000" stroke-width="0.1">14</text><text filter="url(#crisp)" transform="translate(590,204) scale(1,1.1)" font-size="7.5" font-weight="normal" fill="#000" text-anchor="end" stroke="#000" stroke-width="0.1">T1OUT</text><circle cx="598.5" cy="200.5" r="2.3" fill="#C8C8AA" stroke="#860606" stroke-width="1"/><rect x="595" y="210" width="21" height="1" fill="#860606"/><text filter="url(#crisp)" transform="translate(605.5,209) scale(1,1.15)" font-size="7.6" font-weight="normal" fill="#000" text-anchor="start" stroke="#000" stroke-width="0.1">13</text><text filter="url(#crisp)" transform="translate(590,214) scale(1,1.1)" font-size="7.5" font-weight="normal" fill="#000" text-anchor="end" stroke="#000" stroke-width="0.1">R1IN</text><rect x="595" y="219" width="21" height="1" fill="#860606"/><text filter="url(#crisp)" transform="translate(605.5,218) scale(1,1.15)" font-size="7.6" font-weight="normal" fill="#000" text-anchor="start" stroke="#000" stroke-width="0.1">7</text><text filter="url(#crisp)" transform="translate(590,223) scale(1,1.1)" font-size="7.5" font-weight="normal" fill="#000" text-anchor="end" stroke="#000" stroke-width="0.1">T2OUT</text><circle cx="598.5" cy="219.5" r="2.3" fill="#C8C8AA" stroke="#860606" stroke-width="1"/><rect x="595" y="229" width="21" height="1" fill="#860606"/><text filter="url(#crisp)" transform="translate(605.5,228) scale(1,1.15)" font-size="7.6" font-weight="normal" fill="#000" text-anchor="start" stroke="#000" stroke-width="0.1">8</text><text filter="url(#crisp)" transform="translate(590,233) scale(1,1.1)" font-size="7.5" font-weight="normal" fill="#000" text-anchor="end" stroke="#000" stroke-width="0.1">R2IN</text><rect x="595" y="247" width="21" height="1" fill="#860606"/><text filter="url(#crisp)" transform="translate(605.5,246) scale(1,1.15)" font-size="7.6" font-weight="normal" fill="#000" text-anchor="start" stroke="#000" stroke-width="0.1">2</text><text filter="url(#crisp)" transform="translate(590,251) scale(1,1.1)" font-size="7.5" font-weight="normal" fill="#000" text-anchor="end" stroke="#000" stroke-width="0.1">VS+</text><rect x="595" y="257" width="21" height="1" fill="#860606"/><text filter="url(#crisp)" transform="translate(605.5,256) scale(1,1.15)" font-size="7.6" font-weight="normal" fill="#000" text-anchor="start" stroke="#000" stroke-width="0.1">6</text><text filter="url(#crisp)" transform="translate(590,261) scale(1,1.1)" font-size="7.5" font-weight="normal" fill="#000" text-anchor="end" stroke="#000" stroke-width="0.1">VS-</text><rect x="653" y="247" width="15" height="1" fill="#860606"/><rect x="672" y="247" width="20" height="1" fill="#860606"/><rect x="667" y="237" width="1" height="21" fill="#860606"/><path d="M676,237 Q668,247 676,257.5" fill="none" stroke="#860606" stroke-width="1.1"/><rect x="701" y="210" width="1" height="38" fill="#064A06"/><path d="M701.5,200.5 L696.5,210.5 M701.5,200.5 L706.5,210.5" fill="none" stroke="#064A06" stroke-width="1"/><rect x="696" y="210" width="11" height="1" fill="#064A06"/><rect x="701" y="200" width="1" height="11" fill="#064A06"/><rect x="663" y="286" width="15" height="1" fill="#860606"/><rect x="682" y="286" width="20" height="1" fill="#860606"/><rect x="677" y="276" width="1" height="21" fill="#860606"/><path d="M686,276 Q678,286 686,296.5" fill="none" stroke="#860606" stroke-width="1.1"/><rect x="701" y="382" width="20" height="1" fill="#064A06"/><rect x="706" y="386" width="10" height="1" fill="#064A06"/><rect x="710" y="391" width="3" height="1" fill="#064A06"/><text x="662" y="235.5" font-size="11" font-weight="normal" fill="#000" text-anchor="start">C3</text><text filter="url(#crisp)" transform="translate(662.5,265.5) scale(1,1.1)" font-size="7.5" font-weight="normal" fill="#000" text-anchor="start" stroke="#000" stroke-width="0.1">10µF</text><text filter="url(#crisp)" transform="translate(662,274.5) scale(1,1.15)" font-size="7.8" font-weight="normal" fill="#707070" text-anchor="start">&lt;TEXT&gt;</text><text x="672" y="274" font-size="11" font-weight="normal" fill="#000" text-anchor="start">C4</text><text filter="url(#crisp)" transform="translate(672,304) scale(1,1.1)" font-size="7.5" font-weight="normal" fill="#000" text-anchor="start" stroke="#000" stroke-width="0.1">10µF</text><text filter="url(#crisp)" transform="translate(672,313.5) scale(1,1.15)" font-size="7.8" font-weight="normal" fill="#707070" text-anchor="start">&lt;TEXT&gt;</text><rect x="568" y="430" width="14" height="1" fill="#860606"/><circle cx="583.5" cy="430.5" r="2.3" fill="none" stroke="#860606" stroke-width="1"/><path d="M586,430.5 L605.5,415.5 L605.5,444.5 Z" fill="#C8C8AA" stroke="#860606" stroke-width="1"/><rect x="605" y="430" width="20" height="1" fill="#860606"/><text x="585.5" y="412.5" font-size="11.5" font-weight="normal" fill="#000" text-anchor="start">U5</text><text filter="url(#crisp)" transform="translate(585.5,453) scale(1,1.1)" font-size="7.5" font-weight="normal" fill="#000" text-anchor="start" stroke="#000" stroke-width="0.1">NOT</text><text filter="url(#crisp)" transform="translate(585,461.0) scale(1,1.15)" font-size="7.8" font-weight="normal" fill="#707070" text-anchor="start">&lt;TEXT&gt;</text><rect x="682" y="410" width="116" height="78" fill="#C8C8AA"/><rect x="682" y="410" width="116" height="1" fill="#860606"/><rect x="682" y="487" width="116" height="1" fill="#860606"/><rect x="682" y="410" width="1" height="78" fill="#860606"/><rect x="797" y="410" width="1" height="78" fill="#860606"/><rect x="711" y="420" width="77" height="59" fill="#000"/><rect x="711" y="420" width="77" height="1" fill="#860606"/><rect x="711" y="478" width="77" height="1" fill="#860606"/><rect x="711" y="420" width="1" height="59" fill="#860606"/><rect x="787" y="420" width="1" height="59" fill="#860606"/><rect x="715" y="425" width="5" height="5" fill="#00FF00"/><rect x="663" y="420" width="20" height="1" fill="#860606"/><text filter="url(#crisp)" transform="translate(687,424) scale(1,1.1)" font-size="7.5" font-weight="normal" fill="#000" text-anchor="start" stroke="#000" stroke-width="0.1">RXD</text><rect x="663" y="439" width="20" height="1" fill="#860606"/><text filter="url(#crisp)" transform="translate(687,443) scale(1,1.1)" font-size="7.5" font-weight="normal" fill="#000" text-anchor="start" stroke="#000" stroke-width="0.1">TXD</text><rect x="663" y="458" width="20" height="1" fill="#860606"/><text filter="url(#crisp)" transform="translate(687,462) scale(1,1.1)" font-size="7.5" font-weight="normal" fill="#000" text-anchor="start" stroke="#000" stroke-width="0.1">RTS</text><rect x="663" y="478" width="20" height="1" fill="#860606"/><text filter="url(#crisp)" transform="translate(687,482) scale(1,1.1)" font-size="7.5" font-weight="normal" fill="#000" text-anchor="start" stroke="#000" stroke-width="0.1">CTS</text><text x="681" y="409" font-size="11.5" font-weight="normal" fill="#000" text-anchor="start">TER2</text><text filter="url(#crisp)" transform="translate(681,505.5) scale(1,1.15)" font-size="7.8" font-weight="normal" fill="#707070" text-anchor="start">&lt;TEXT&gt;</text><rect x="385" y="372" width="68" height="126" fill="#C8C8AA"/><rect x="385" y="372" width="68" height="1" fill="#860606"/><rect x="385" y="497" width="68" height="1" fill="#860606"/><rect x="385" y="372" width="1" height="126" fill="#860606"/><rect x="452" y="372" width="1" height="126" fill="#860606"/><text x="384.5" y="370" font-size="11" font-weight="normal" fill="#000" text-anchor="start">P1</text><text filter="url(#crisp)" transform="translate(384,506) scale(1,1.1)" font-size="7.5" font-weight="normal" fill="#000" text-anchor="start" stroke="#000" stroke-width="0.1">COMPIM</text><text filter="url(#crisp)" transform="translate(384,515.5) scale(1,1.15)" font-size="7.8" font-weight="normal" fill="#707070" text-anchor="start">&lt;TEXT&gt;</text><rect x="452" y="391" width="21" height="1" fill="#860606"/><text filter="url(#crisp)" transform="translate(464.5,390) scale(1,1.15)" font-size="7.6" font-weight="normal" fill="#000" text-anchor="middle" stroke="#000" stroke-width="0.1">1</text><text filter="url(#crisp)" transform="translate(449,395) scale(1,1.1)" font-size="7.5" font-weight="normal" fill="#000" text-anchor="end" stroke="#000" stroke-width="0.1">DCD</text><rect x="452" y="401" width="21" height="1" fill="#860606"/><text filter="url(#crisp)" transform="translate(464.5,400) scale(1,1.15)" font-size="7.6" font-weight="normal" fill="#000" text-anchor="middle" stroke="#000" stroke-width="0.1">6</text><text filter="url(#crisp)" transform="translate(449,405) scale(1,1.1)" font-size="7.5" font-weight="normal" fill="#000" text-anchor="end" stroke="#000" stroke-width="0.1">DSR</text><rect x="452" y="410" width="21" height="1" fill="#860606"/><text filter="url(#crisp)" transform="translate(464.5,409) scale(1,1.15)" font-size="7.6" font-weight="normal" fill="#000" text-anchor="middle" stroke="#000" stroke-width="0.1">2</text><text filter="url(#crisp)" transform="translate(449,414) scale(1,1.1)" font-size="7.5" font-weight="normal" fill="#000" text-anchor="end" stroke="#000" stroke-width="0.1">RXD</text><rect x="452" y="420" width="21" height="1" fill="#860606"/><text filter="url(#crisp)" transform="translate(464.5,419) scale(1,1.15)" font-size="7.6" font-weight="normal" fill="#000" text-anchor="middle" stroke="#000" stroke-width="0.1">7</text><text filter="url(#crisp)" transform="translate(449,424) scale(1,1.1)" font-size="7.5" font-weight="normal" fill="#000" text-anchor="end" stroke="#000" stroke-width="0.1">RTS</text><rect x="452" y="430" width="21" height="1" fill="#860606"/><text filter="url(#crisp)" transform="translate(464.5,429) scale(1,1.15)" font-size="7.6" font-weight="normal" fill="#000" text-anchor="middle" stroke="#000" stroke-width="0.1">3</text><text filter="url(#crisp)" transform="translate(449,434) scale(1,1.1)" font-size="7.5" font-weight="normal" fill="#000" text-anchor="end" stroke="#000" stroke-width="0.1">TXD</text><rect x="452" y="439" width="21" height="1" fill="#860606"/><text filter="url(#crisp)" transform="translate(464.5,438) scale(1,1.15)" font-size="7.6" font-weight="normal" fill="#000" text-anchor="middle" stroke="#000" stroke-width="0.1">8</text><text filter="url(#crisp)" transform="translate(449,443) scale(1,1.1)" font-size="7.5" font-weight="normal" fill="#000" text-anchor="end" stroke="#000" stroke-width="0.1">CTS</text><rect x="452" y="449" width="21" height="1" fill="#860606"/><text filter="url(#crisp)" transform="translate(464.5,448) scale(1,1.15)" font-size="7.6" font-weight="normal" fill="#000" text-anchor="middle" stroke="#000" stroke-width="0.1">4</text><text filter="url(#crisp)" transform="translate(449,453) scale(1,1.1)" font-size="7.5" font-weight="normal" fill="#000" text-anchor="end" stroke="#000" stroke-width="0.1">DTR</text><rect x="452" y="458" width="21" height="1" fill="#860606"/><text filter="url(#crisp)" transform="translate(464.5,457) scale(1,1.15)" font-size="7.6" font-weight="normal" fill="#000" text-anchor="middle" stroke="#000" stroke-width="0.1">9</text><text filter="url(#crisp)" transform="translate(449,462) scale(1,1.1)" font-size="7.5" font-weight="normal" fill="#000" text-anchor="end" stroke="#000" stroke-width="0.1">RI</text><path d="M395.5,390 Q395.5,386 400,385.5 L420,382.5 Q424.5,382 424.5,386 L424.5,474 Q424.5,479 420,478.5 L400,472 Q395.5,470.5 395.5,466 Z" fill="none" stroke="#860606" stroke-width="1"/><circle cx="414.5" cy="391.5" r="4" fill="#DCDCC6" stroke="#860606" stroke-width="1"/><rect x="418" y="391" width="7" height="1" fill="#860606"/><circle cx="404.5" cy="401.5" r="4" fill="#DCDCC6" stroke="#860606" stroke-width="1"/><rect x="408" y="401" width="17" height="1" fill="#860606"/><circle cx="414.5" cy="410.5" r="4" fill="#DCDCC6" stroke="#860606" stroke-width="1"/><rect x="418" y="410" width="7" height="1" fill="#860606"/><circle cx="404.5" cy="420.5" r="4" fill="#DCDCC6" stroke="#860606" stroke-width="1"/><rect x="408" y="420" width="17" height="1" fill="#860606"/><circle cx="414.5" cy="430.5" r="4" fill="#DCDCC6" stroke="#860606" stroke-width="1"/><rect x="418" y="430" width="7" height="1" fill="#860606"/><circle cx="404.5" cy="439.5" r="4" fill="#DCDCC6" stroke="#860606" stroke-width="1"/><rect x="408" y="439" width="17" height="1" fill="#860606"/><circle cx="414.5" cy="449.5" r="4" fill="#DCDCC6" stroke="#860606" stroke-width="1"/><rect x="418" y="449" width="7" height="1" fill="#860606"/><circle cx="404.5" cy="458.5" r="4" fill="#DCDCC6" stroke="#860606" stroke-width="1"/><rect x="408" y="458" width="17" height="1" fill="#860606"/><circle cx="414.5" cy="468.5" r="4" fill="#DCDCC6" stroke="#860606" stroke-width="1"/><rect x="418" y="468" width="7" height="1" fill="#860606"/><rect x="418" y="468" width="21" height="1" fill="#860606"/><rect x="438" y="468" width="1" height="6" fill="#860606"/><rect x="431" y="473" width="15" height="1" fill="#860606"/><rect x="434" y="476" width="9" height="1" fill="#860606"/><rect x="437" y="479" width="3" height="1" fill="#860606"/><rect x="391.5" y="484.5" width="8" height="7" fill="none" stroke="#860606" stroke-width="1"/><rect x="440.5" y="484.5" width="8" height="7" fill="none" stroke="#860606" stroke-width="1"/><text filter="url(#crisp)" transform="translate(406,491.5) scale(1,1.1)" font-size="7.5" font-weight="normal" fill="#860606" text-anchor="start" letter-spacing="0.3" stroke="#860606" stroke-width="0.1">ERROR</text>
</svg></body></html>
